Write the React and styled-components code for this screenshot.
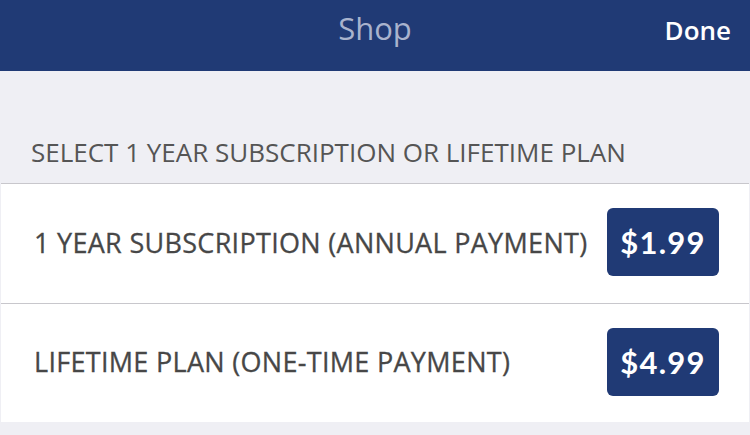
import React from "react";
import styled, { createGlobalStyle } from "styled-components";

const GlobalStyle = createGlobalStyle`
  html, body {
    margin: 0;
    padding: 0;
    background: #efeff4;
  }
  * {
    box-sizing: border-box;
  }
`;

const plans = [
  { label: "1 YEAR SUBSCRIPTION (ANNUAL PAYMENT)", price: "$1.99" },
  { label: "LIFETIME PLAN (ONE-TIME PAYMENT)", price: "$4.99" },
];

const App = () => {
  return (
    <>
      <GlobalStyle />
      <Screen>
        <NavBar>
          <Title>Shop</Title>
          <DoneBtn>Done</DoneBtn>
        </NavBar>
        <SectionHeader>SELECT 1 YEAR SUBSCRIPTION OR LIFETIME PLAN</SectionHeader>
        <List>
          {plans.map((plan, index) => (
            <Row key={index}>
              <RowLabel>{plan.label}</RowLabel>
              <PriceBtn>{plan.price}</PriceBtn>
            </Row>
          ))}
        </List>
      </Screen>
    </>
  );
};

export default App;

const Screen = styled.div`
  width: 750px;
  height: 435px;
  background: #efeff4;
  padding: 0 1px;
  overflow: hidden;
`;

const NavBar = styled.div`
  height: 71px;
  margin: 0 -1px;
  background-color: #203a75;
  display: flex;
  align-items: center;
  justify-content: center;
  position: relative;
`;

const Title = styled.div`
  font-family: "Open Sans", sans-serif;
  font-size: 31px;
  color: #a9b3cd;
  margin-top: -16px;
`;

const DoneBtn = styled.div`
  position: absolute;
  right: 19px;
  top: 12px;
  font-family: "Open Sans", sans-serif;
  font-weight: 600;
  font-size: 26px;
  color: #ffffff;
`;

const SectionHeader = styled.div`
  height: 112px;
  display: flex;
  align-items: flex-end;
  padding: 0 0 16px 30px;
  font-family: "Open Sans", sans-serif;
  font-size: 26px;
  line-height: 30px;
  color: #555555;
`;

const List = styled.div`
  background: #ffffff;
  border-top: 1px solid #c8c7cc;
`;

const Row = styled.div`
  height: 119px;
  display: flex;
  align-items: center;
  justify-content: space-between;
  padding: 0 30px 3px 33px;

  & + & {
    border-top: 1px solid #c8c7cc;
  }
`;

const RowLabel = styled.div`
  font-family: "Open Sans", sans-serif;
  font-size: 27px;
  letter-spacing: 0.3px;
  color: #474747;
  -webkit-text-stroke: 0.3px #474747;
`;

const PriceBtn = styled.div`
  width: 112px;
  height: 68px;
  border-radius: 6px;
  background-color: #203a75;
  color: #ffffff;
  font-family: Lato, sans-serif;
  font-weight: 700;
  font-size: 31px;
  letter-spacing: 1.2px;
  display: flex;
  align-items: center;
  justify-content: center;
`;
